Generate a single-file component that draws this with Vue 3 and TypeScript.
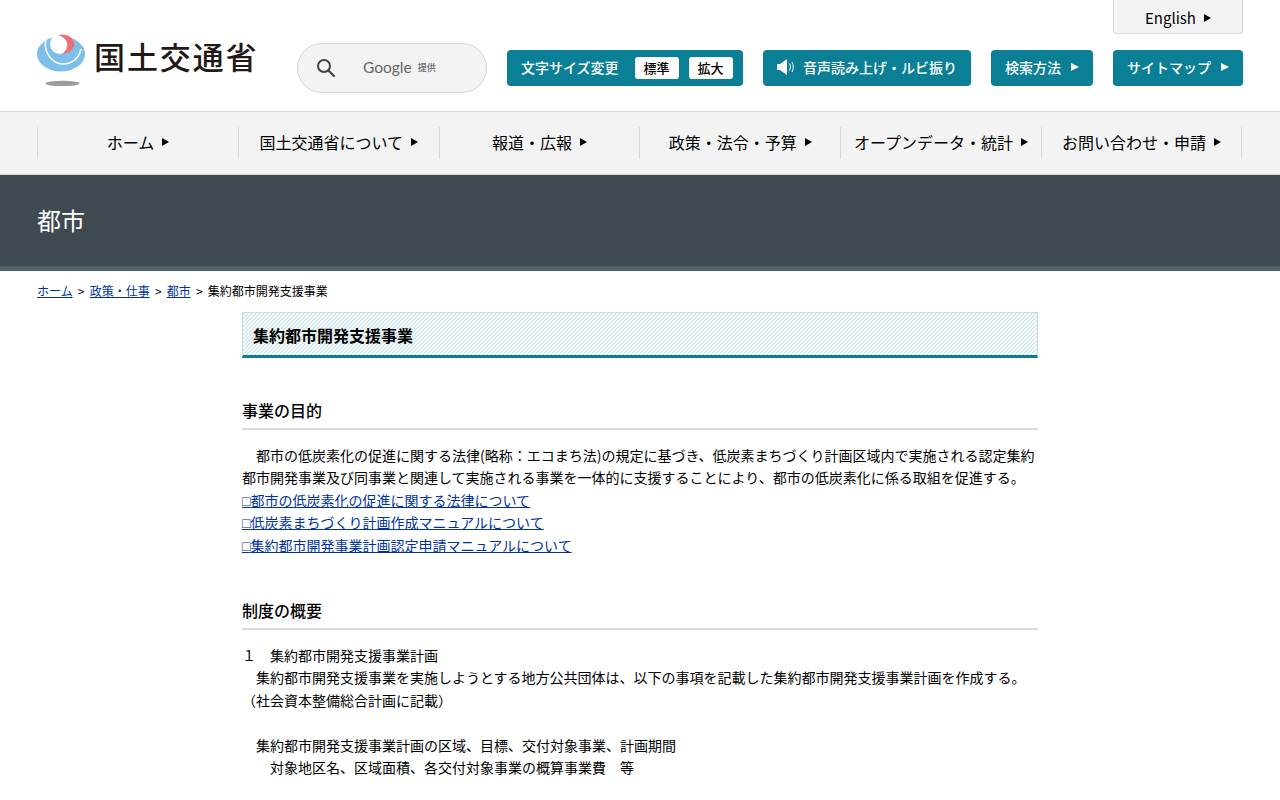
<script setup lang="ts">
const nav: string[] = ['ホーム', '国土交通省について', '報道・広報', '政策・法令・予算', 'オープンデータ・統計', 'お問い合わせ・申請']
const links: string[] = ['都市の低炭素化の促進に関する法律について', '低炭素まちづくり計画作成マニュアルについて', '集約都市開発事業計画認定申請マニュアルについて']
</script>

<template>
  <div class="page">
    <header class="header">
      <div class="logo">
        <svg class="mark" width="48" height="52" viewBox="0 0 48 52">
          <ellipse cx="24" cy="20" rx="24" ry="17.5" fill="#7dbfe9"/>
          <path d="M9 5C6 18 15 30 26 30C34 30 42 25 44 15" fill="none" stroke="#fff" stroke-width="1.5"/>
          <circle cx="23" cy="10" r="10" fill="#fff"/>
          <path d="M21 1C28 -1 36 2 37 9C38 15 33 19 25 20C29 17 31 13 30 9C29 5 26 3 21 1Z" fill="#ee6f78"/>
          <ellipse cx="25.5" cy="49.5" rx="17" ry="2.7" fill="#9c9c9c"/>
        </svg>
        <span class="logo-text">国土交通省</span>
      </div>
      <div class="search">
        <svg width="20" height="20" viewBox="0 0 20 20" class="glass">
          <circle cx="8" cy="8" r="6" fill="none" stroke="#444" stroke-width="2"/>
          <path d="M12.5 12.5L18 18" stroke="#444" stroke-width="2.2" stroke-linecap="round"/>
        </svg>
        <span class="google">Google</span>
        <span class="teikyo">提供</span>
      </div>
      <div class="tools">
        <a class="english">English<i class="tri dark"></i></a>
        <div class="tool-row">
          <div class="btn size">
            <span>文字サイズ変更</span>
            <b class="chip first">標準</b>
            <b class="chip">拡大</b>
          </div>
          <a class="btn read">
            <svg width="18" height="16" viewBox="0 0 18 16">
              <path d="M0 5H3L10 0V16L3 11H0Z" fill="#fff"/>
              <path d="M12.5 4.5C13.7 6.5 13.7 9.5 12.5 11.5M15 3C16.7 6 16.7 10 15 13" fill="none" stroke="#fff" stroke-width="1"/>
            </svg>
            <span>音声読み上げ・ルビ振り</span>
          </a>
          <a class="btn method">検索方法<i class="tri light"></i></a>
          <a class="btn map">サイトマップ<i class="tri light"></i></a>
        </div>
      </div>
    </header>

    <nav class="nav">
      <a v-for="item in nav" :key="item" class="nav-item">{{ item }}<i class="tri dark"></i></a>
    </nav>

    <div class="banner">都市</div>

    <div class="crumbs">
      <a>ホーム</a><span class="sep">&gt;</span><a>政策・仕事</a><span class="sep">&gt;</span><a>都市</a><span class="sep">&gt;</span>集約都市開発支援事業
    </div>

    <main class="main">
      <h1 class="title">集約都市開発支援事業</h1>

      <h2 class="sub first-sub">事業の目的</h2>
      <div class="text">
        <p>　都市の低炭素化の促進に関する法律(略称：エコまち法)の規定に基づき、低炭素まちづくり計画区域内で実施される認定集約都市開発事業及び同事業と関連して実施される事業を一体的に支援することにより、都市の低炭素化に係る取組を促進する。</p>
        <p v-for="l in links" :key="l"><a><span class="box">□</span>{{ l }}</a></p>
      </div>

      <h2 class="sub second-sub">制度の概要</h2>
      <div class="text">
        <p>１　集約都市開発支援事業計画</p>
        <p>　集約都市開発支援事業を実施しようとする地方公共団体は、以下の事項を記載した集約都市開発支援事業計画を作成する。（社会資本整備総合計画に記載）</p>
        <p>&nbsp;</p>
        <p>　集約都市開発支援事業計画の区域、目標、交付対象事業、計画期間</p>
        <p>　　対象地区名、区域面積、各交付対象事業の概算事業費　等</p>
      </div>
    </main>
  </div>
</template>

<style>
html, body { margin: 0; background: #fff; }
</style>

<style scoped>
.page {
  font-family: "Noto Sans CJK JP", "Noto Sans", sans-serif;
  color: #000;
  font-size: 14px;
  height: 800px;
  overflow: hidden;
}
a { cursor: pointer; }
.header {
  height: 111px;
  display: flex;
  padding: 0 37px;
  box-sizing: border-box;
}
.logo {
  display: flex;
  align-items: flex-start;
  gap: 9px;
  width: 260px;
  padding-top: 34px;
}
.logo-text {
  font-size: 31px;
  line-height: 44px;
  letter-spacing: 1.9px;
  font-weight: 500;
  color: #231815;
  white-space: nowrap;
}
.search {
  width: 190px;
  height: 50px;
  margin-top: 43px;
  box-sizing: border-box;
  border: 1px solid #d8d8d8;
  border-radius: 25px;
  background: #f3f3f3;
  display: flex;
  align-items: center;
  padding-left: 18px;
  color: #666;
}
.glass { margin: -1px 27px 0 0; }
.google { font-family: "Lato", sans-serif; font-size: 15.5px; margin: -2px 6px 0 0; }
.teikyo { font-size: 9px; font-weight: 500; margin-top: -1px; }
.tools {
  margin-left: 20px;
  width: 736px;
  display: flex;
  flex-direction: column;
  align-items: flex-end;
}
.english {
  width: 130px;
  height: 34px;
  box-sizing: border-box;
  border: 1px solid #d8d8d8;
  border-top: 0;
  border-radius: 0 0 4px 4px;
  background: #f3f3f3;
  display: flex;
  justify-content: center;
  align-items: center;
  font-size: 15px;
  padding-top: 2px;
}
.tool-row {
  margin-top: 16px;
  display: flex;
  width: 736px;
  justify-content: space-between;
}
.btn {
  height: 36px;
  padding-bottom: 2px;
  border-radius: 4px;
  background: #0b7f96;
  color: #fff;
  font-size: 14px;
  font-weight: 500;
  display: flex;
  align-items: center;
  box-sizing: border-box;
  white-space: nowrap;
}
.size { width: 236px; padding-left: 14px; }
.chip {
  background: #fff;
  color: #000;
  font-size: 13px;
  font-weight: 500;
  width: 44px;
  height: 22px;
  padding-bottom: 2px;
  box-sizing: border-box;
  border-radius: 3px;
  margin: 2px 0 0 10px;
  display: flex;
  align-items: center;
  justify-content: center;
}
.chip.first { margin-left: 16px; }
.read { width: 208px; padding-left: 14px; gap: 8px; }
.method { width: 102px; justify-content: center; }
.map { width: 130px; justify-content: center; }
.tri {
  display: inline-block;
  width: 0;
  height: 0;
  border-style: solid;
  border-color: transparent;
}
.tri.dark { border-width: 4px 0 4px 7px; border-left-color: #000; margin-left: 8px; }
.tri.light { border-width: 4.5px 0 4.5px 8px; border-left-color: #fff; margin-left: 10px; }
.nav {
  height: 64px;
  box-sizing: border-box;
  border-top: 1px solid #d8d8d8;
  border-bottom: 1px solid #d8d8d8;
  background: #f3f3f3;
  display: flex;
  align-items: center;
  padding-left: 37px;
}
.nav-item {
  flex: 0 0 200.8px;
  box-sizing: border-box;
  height: 32px;
  padding-bottom: 2px;
  display: flex;
  align-items: center;
  justify-content: center;
  font-size: 16px;
  border-left: 1px solid #d8d8d8;
  white-space: nowrap;
}
.nav-item:last-child { border-right: 1px solid #d8d8d8; }
.banner {
  height: 96px;
  box-sizing: border-box;
  background: #3e4a50;
  border-bottom: 5px solid #53626a;
  color: #fff;
  font-size: 24px;
  line-height: 89px;
  padding-left: 37px;
}
.crumbs {
  padding: 11px 37px 0;
  font-size: 12px;
  line-height: 18px;
}
.sep { margin: 0 5.2px; }
.crumbs a, .text a { color: #0033a0; text-decoration: underline; }
.box { font-family: "Liberation Sans", sans-serif; line-height: 0; }
.main { width: 796px; margin: 12px 0 0 242px; }
.title {
  margin: 0;
  height: 46px;
  box-sizing: border-box;
  padding-left: 10px;
  font-size: 16px;
  font-weight: 700;
  line-height: 45px;
  border: 1px solid #c9dde2;
  border-bottom: 3px solid #0b7f96;
  background-color: #f4fafa;
  background-image: linear-gradient(135deg, #d9ebee 25%, #f4fafa 25%, #f4fafa 50%, #d9ebee 50%, #d9ebee 75%, #f4fafa 75%);
  background-size: 4px 4px;
}
.sub {
  margin: 0;
  font-size: 16px;
  font-weight: 500;
  line-height: 24px;
  padding-bottom: 6px;
  border-bottom: 2px solid #d8d8d8;
}
.first-sub { margin-top: 40px; }
.second-sub { margin-top: 42px; }
.text { margin-top: 14px; line-height: 22.4px; }
.text p { margin: 0; }
</style>
